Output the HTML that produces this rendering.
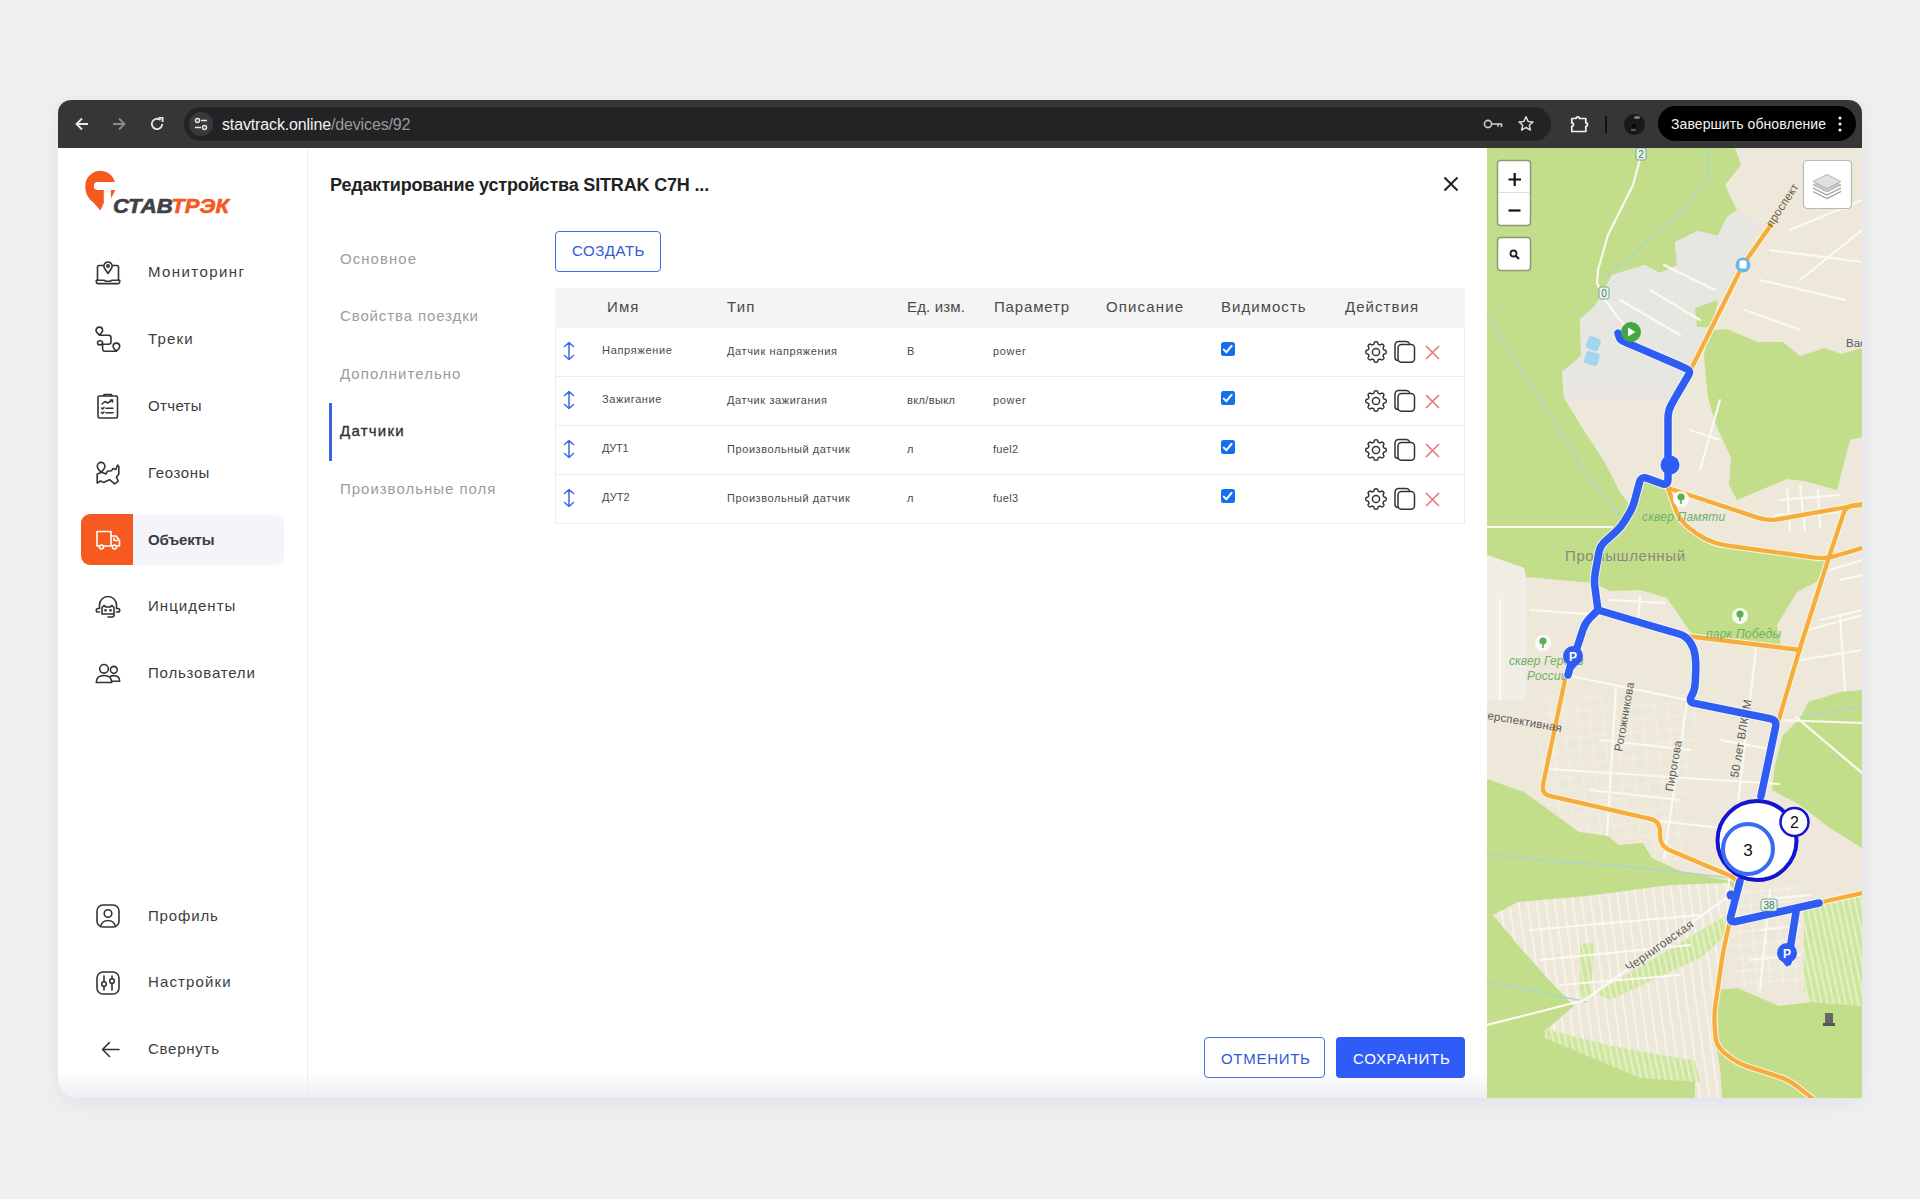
<!DOCTYPE html>
<html><head><meta charset="utf-8">
<style>
*{margin:0;padding:0;box-sizing:border-box}
html,body{width:1920px;height:1199px;overflow:hidden;background:#f0f0f0;font-family:"Liberation Sans",sans-serif;position:relative}
#win{position:absolute;left:58px;top:100px;width:1804px;height:998px;border-radius:13px 13px 20px 20px;background:#fff;overflow:hidden;box-shadow:0 6px 18px rgba(190,197,225,0.32)}
.a{position:absolute}
.t{position:absolute;white-space:nowrap;line-height:1}
.nav{font-size:15px;color:#3c3c3c;left:148px}
.tab{font-size:15px;color:#9c9c9c;left:340px}
.th{font-size:15px;color:#4a4a4a;top:298.7px}
.td{font-size:11px;color:#4a4a4a}
svg{position:absolute;overflow:visible}
.ic{fill:none;stroke:#333;stroke-width:1.6;stroke-linecap:round;stroke-linejoin:round}
</style></head><body>
<div id="win">
  <div class="a" style="left:0;top:0;width:1804px;height:48px;background:#363636"></div>
  <div class="a" style="left:0;top:48px;width:250px;height:950px;border-right:1px solid #ededed"></div>
  <div class="a" style="left:0;top:972px;width:1430px;height:26px;background:linear-gradient(to bottom,rgba(236,236,241,0),rgba(234,235,241,0.85))"></div>
</div>
<!-- toolbar -->
<svg style="left:74px;top:116px" width="16" height="16" viewBox="0 0 16 16"><path d="M14 8H2.5M8 2.5L2.5 8L8 13.5" stroke="#e8e8e8" stroke-width="1.8" fill="none"/></svg>
<svg style="left:111px;top:116px" width="16" height="16" viewBox="0 0 16 16"><path d="M2 8H13.5M8 2.5L13.5 8L8 13.5" stroke="#8a8a8a" stroke-width="1.8" fill="none"/></svg>
<svg style="left:149px;top:116px" width="16" height="16" viewBox="0 0 16 16"><path d="M13.2 8A5.2 5.2 0 1 1 11.6 4.2" stroke="#e8e8e8" stroke-width="1.8" fill="none"/><path d="M9.5 1.8H13.6V5.9" stroke="#e8e8e8" stroke-width="1.8" fill="none"/></svg>
<div class="a" style="left:184px;top:107px;width:1367px;height:34px;border-radius:17px;background:#232325"></div>
<div class="a" style="left:189px;top:112px;width:24px;height:24px;border-radius:12px;background:#3a3a3c"></div>
<svg style="left:194px;top:117px" width="14" height="14" viewBox="0 0 14 14"><circle cx="3.5" cy="3.5" r="2" stroke="#e8e8e8" stroke-width="1.5" fill="none"/><path d="M7 3.5H13M1 10.5H7" stroke="#e8e8e8" stroke-width="1.5"/><circle cx="10.5" cy="10.5" r="2" stroke="#e8e8e8" stroke-width="1.5" fill="none"/></svg>
<div class="t" style="left:222px;top:117px;font-size:16px;color:#f2f2f2;letter-spacing:-0.14px">stavtrack.online<span style="color:#9a9a9a">/devices/92</span></div>
<svg style="left:1483px;top:117px" width="20" height="14" viewBox="0 0 20 14"><circle cx="5" cy="7" r="3.6" stroke="#cfcfcf" stroke-width="1.6" fill="none"/><path d="M8.6 7H18.5V10M15 7V9.5" stroke="#cfcfcf" stroke-width="1.6" fill="none"/></svg>
<svg style="left:1517px;top:115px" width="18" height="18" viewBox="0 0 18 18"><path d="M9 1.8L11.1 6.4L16 6.9L12.3 10.2L13.4 15.1L9 12.5L4.6 15.1L5.7 10.2L2 6.9L6.9 6.4Z" stroke="#d8d8d8" stroke-width="1.5" fill="none" stroke-linejoin="round"/></svg>
<svg style="left:1570px;top:114px" width="20" height="20" viewBox="0 0 20 20"><path d="M1.8 4.5H6A1.7 1.7 0 0 1 9.4 4.5H15.8V8.9A1.7 1.7 0 0 1 15.8 12.3V17.5H1.8V12.3A1.7 1.7 0 0 0 1.8 8.9Z" stroke="#f2f2f2" stroke-width="1.7" fill="none" stroke-linejoin="round"/></svg>
<div class="a" style="left:1605px;top:116px;width:2px;height:17px;background:#111"></div>
<div class="a" style="left:1624px;top:114px;width:21px;height:21px;border-radius:11px;background:#17171c;overflow:hidden"><div class="a" style="left:10px;top:2px;width:6px;height:3px;border-radius:2px;background:#777"></div><div class="a" style="left:8px;top:10px;width:4px;height:4px;border-radius:2px;background:#050510"></div><div class="a" style="left:7px;top:15px;width:5px;height:2px;background:#555"></div></div>
<div class="a" style="left:1658px;top:106px;width:198px;height:35px;border-radius:18px;background:#000"></div>
<div class="t" style="left:1671px;top:117px;font-size:14px;color:#f4f4f4;letter-spacing:0.08px">Завершить обновление</div>
<svg style="left:1838px;top:115px" width="4" height="18" viewBox="0 0 4 18"><circle cx="2" cy="3" r="1.6" fill="#eee"/><circle cx="2" cy="9" r="1.6" fill="#eee"/><circle cx="2" cy="15" r="1.6" fill="#eee"/></svg>
<!-- logo -->
<svg style="left:80px;top:165px" width="40" height="48" viewBox="0 0 40 48">
  <path d="M34.8 17A15 15 0 0 0 5.3 21C5.3 29 8.5 34 13.5 37.5L20.4 45.6L23.8 38V25H17.8A4 4 0 0 1 17.8 17Z" fill="#f45a1f"/>
  <path d="M30.8 25H35.4L31 33.4Z" fill="#f45a1f"/>
</svg>
<svg style="left:112px;top:190px" width="120" height="26" viewBox="0 0 120 26"><text x="1" y="22.7" font-family="Liberation Sans" font-weight="700" font-size="19.5" font-style="italic" textLength="116" lengthAdjust="spacingAndGlyphs" fill="#3e4046" stroke="#3e4046" stroke-width="0.6">СТАВ<tspan fill="#f45a1f" stroke="#f45a1f">ТРЭК</tspan></text></svg>
<!-- active -->
<div class="a" style="left:81px;top:515px;width:203px;height:50px;border-radius:9px;background:#f4f4fa"></div>
<div class="a" style="left:81px;top:514px;width:52px;height:51px;border-radius:9px 0 0 9px;background:#f65a20"></div>
<!-- nav text -->
<div class="t nav" style="top:264px;letter-spacing:1.42px">Мониторинг</div>
<div class="t nav" style="top:331px;letter-spacing:1.16px">Треки</div>
<div class="t nav" style="top:398px;letter-spacing:0.35px">Отчеты</div>
<div class="t nav" style="top:465px;letter-spacing:0.59px">Геозоны</div>
<div class="t nav" style="top:532px;letter-spacing:-0.2px;font-weight:700;color:#3a3d45">Объекты</div>
<div class="t nav" style="top:598px;letter-spacing:1.04px">Инциденты</div>
<div class="t nav" style="top:665px;letter-spacing:0.81px">Пользователи</div>
<div class="t nav" style="top:908px;letter-spacing:0.84px">Профиль</div>
<div class="t nav" style="top:974px;letter-spacing:1.12px">Настройки</div>
<div class="t nav" style="top:1041px;letter-spacing:0.74px">Свернуть</div>
<!-- icons -->
<svg style="left:95px;top:260px" width="26" height="26" viewBox="0 0 26 26" class="ic">
  <path d="M2.5 19.5V7A1.5 1.5 0 0 1 4 5.5H8.5M17.5 5.5H22A1.5 1.5 0 0 1 23.5 7V19.5"/>
  <path d="M1.3 20.3H9.5L10.5 21.2H15.5L16.5 20.3H24.7V21.8A1.8 1.8 0 0 1 22.9 23.6H3.1A1.8 1.8 0 0 1 1.3 21.8Z"/>
  <path d="M13 13.5L9.3 8A4.15 4.15 0 1 1 16.7 8Z"/>
  <circle cx="13" cy="5.9" r="1.2"/>
</svg>
<svg style="left:95px;top:327px" width="26" height="26" viewBox="0 0 26 26" class="ic">
  <path d="M4.3 7.9C2.6 6.4 1 5 1 3.4A3.3 3.3 0 0 1 7.6 3.4C7.6 5 6.1 6.4 4.3 7.9Z"/>
  <path d="M4.3 7.9Q4.6 8.2 6 8.2H13.5A2.5 2.5 0 0 1 16 10.7V14.8A2.5 2.5 0 0 1 13.5 17.3H7.4"/>
  <ellipse cx="5" cy="15.8" rx="2.5" ry="2.1"/>
  <path d="M7.6 16.6V21.8A2.5 2.5 0 0 0 10.1 24.3H21.4"/>
  <path d="M21.4 24C19.7 22.5 18.1 21.1 18.1 19.4A3.3 3.3 0 0 1 24.7 19.4C24.7 21.1 23.1 22.5 21.4 24Z"/>
</svg>
<svg style="left:95px;top:393px" width="26" height="26" viewBox="0 0 26 26" class="ic">
  <rect x="3" y="3" width="19.5" height="22" rx="1.5"/>
  <path d="M9 3V1.5H16.5V3"/>
  <path d="M7 11L10 8.5L12.5 10L17.5 7M15.5 7H17.5V9"/>
  <path d="M6.5 15L7.5 16L9 14.5M11 15.2H18M6.5 19.5L7.5 20.5L9 19M11 19.7H18"/>
</svg>
<svg style="left:95px;top:460px" width="26" height="26" viewBox="0 0 26 26" class="ic">
  <path d="M6.1 12.2C4.2 10.4 2.3 8.6 2.3 6.2A3.8 3.8 0 0 1 9.9 6.2C9.9 8.6 8 10.4 6.1 12.2Z"/>
  <path d="M2.2 14V23L5.5 21L8.5 22.4L14.5 19.7L19.6 23.9L23.2 21.2L21.4 17L23.8 14V6.5L22.6 5L20.8 9.5L17.8 8.6L16.6 10.7L12.4 11.3L10.9 14L6.9 12.3Z"/>
</svg>
<svg style="left:95px;top:528px" width="26" height="24" viewBox="0 0 26 24" fill="none" stroke="#fff" stroke-width="1.6" stroke-linejoin="round">
  <path d="M2 3.5H16V18H2Z"/>
  <path d="M16 8H21L24.5 12.5V18H16"/>
  <circle cx="6.5" cy="19" r="2" fill="#f65a20"/>
  <circle cx="19.5" cy="19" r="2" fill="#f65a20"/>
  <path d="M19 9.5V12.5H23"/>
</svg>
<svg style="left:95px;top:594px" width="26" height="26" viewBox="0 0 26 26" class="ic">
  <path d="M4.5 14V11A8.5 8.5 0 0 1 21.5 11V14"/>
  <path d="M4.5 14.5H3A1.5 1.5 0 0 0 3 18H4.5M21.5 14.5H23A1.5 1.5 0 0 1 23 18H21.5"/>
  <path d="M7 20V13.5L9 11.5L11 13H15L17 11.5L19 13.5V20H7Z"/>
  <path d="M19 20V21A2 2 0 0 1 17 23H13"/>
  <circle cx="10.5" cy="16.3" r="0.6"/><circle cx="15.5" cy="16.3" r="0.6"/>
</svg>
<svg style="left:95px;top:660px" width="26" height="26" viewBox="0 0 26 26" class="ic">
  <circle cx="9" cy="8.8" r="4.3"/>
  <path d="M1.3 22.5C1.3 17.8 4.5 15.5 9 15.5C13.5 15.5 16.7 17.8 16.7 22.5Z"/>
  <circle cx="18.8" cy="9.8" r="3.4"/>
  <path d="M15.3 16.2C16.3 15.8 17.5 15.6 18.8 15.6C22.3 15.6 24.7 17.6 24.7 21.3H17.2"/>
</svg>
<svg style="left:95px;top:903px" width="26" height="26" viewBox="0 0 26 26" class="ic">
  <rect x="2" y="2" width="22" height="22" rx="6"/>
  <circle cx="13" cy="10.5" r="3.8"/>
  <path d="M5.5 23.5C6.5 19.5 9.5 17.5 13 17.5C16.5 17.5 19.5 19.5 20.5 23.5"/>
</svg>
<svg style="left:95px;top:970px" width="26" height="26" viewBox="0 0 26 26" class="ic">
  <rect x="2" y="2" width="22" height="22" rx="6"/>
  <path d="M9 6V11.5M9 16.5V20M17 6V8.5M17 13.5V20"/>
  <circle cx="9" cy="14" r="2.3"/><circle cx="17" cy="11" r="2.3"/>
</svg>
<svg style="left:101px;top:1041px" width="19" height="17" viewBox="0 0 19 17" class="ic">
  <path d="M18 8.5H1.5M8.5 1.5L1.5 8.5L8.5 15.5"/>
</svg>
<!-- modal -->
<div class="t" style="left:330px;top:176px;font-size:18px;font-weight:700;color:#222;letter-spacing:-0.17px">Редактирование устройства SITRAK C7H ...</div>
<svg style="left:1443px;top:176px" width="16" height="16" viewBox="0 0 16 16"><path d="M1.5 1.5L14.5 14.5M14.5 1.5L1.5 14.5" stroke="#222" stroke-width="2" fill="none"/></svg>
<div class="t tab" style="top:251px;letter-spacing:1.04px">Основное</div>
<div class="t tab" style="top:308px;letter-spacing:0.88px">Свойства поездки</div>
<div class="t tab" style="top:366px;letter-spacing:1.04px">Дополнительно</div>
<div class="t tab" style="top:423px;letter-spacing:1.25px;color:#333;-webkit-text-stroke:0.35px #333">Датчики</div>
<div class="t tab" style="top:481px;letter-spacing:0.98px">Произвольные поля</div>
<div class="a" style="left:329px;top:403px;width:3px;height:58px;background:#3a63e6"></div>
<!-- create -->
<div class="a" style="left:555px;top:231px;width:106px;height:41px;border:1.5px solid #4169e1;border-radius:4px"></div>
<div class="t" style="left:572px;top:243px;font-size:15px;color:#2f5ad8;letter-spacing:0.54px">СОЗДАТЬ</div>
<!-- table -->
<div class="a" style="left:555px;top:288px;width:910px;height:236px;border:1px solid #efefef;border-top:none"></div>
<div class="a" style="left:555px;top:288px;width:910px;height:40px;background:#f4f4f4"></div>
<div class="t th" style="left:607px;letter-spacing:1.14px">Имя</div>
<div class="t th" style="left:727px;letter-spacing:1.19px">Тип</div>
<div class="t th" style="left:907px;letter-spacing:0.14px">Ед. изм.</div>
<div class="t th" style="left:994px;letter-spacing:0.83px">Параметр</div>
<div class="t th" style="left:1106px;letter-spacing:1.14px">Описание</div>
<div class="t th" style="left:1221px;letter-spacing:1.03px">Видимость</div>
<div class="t th" style="left:1345px;letter-spacing:1.04px">Действия</div>
<div class="a" style="left:555px;top:376px;width:910px;height:1px;background:#ececec"></div>
<div class="a" style="left:555px;top:425px;width:910px;height:1px;background:#ececec"></div>
<div class="a" style="left:555px;top:474px;width:910px;height:1px;background:#ececec"></div>
<div class="a" style="left:555px;top:523px;width:910px;height:1px;background:#ececec"></div>
<svg style="left:563px;top:341px" width="12" height="20" viewBox="0 0 12 20"><path d="M6 1.5V18.5M1.5 5.5L6 1.5L10.5 5.5M1.5 14.5L6 18.5L10.5 14.5" stroke="#3d68e6" stroke-width="1.5" fill="none" stroke-linecap="round" stroke-linejoin="round"/></svg>
<div class="t td" style="left:602px;top:345px;letter-spacing:0.69px">Напряжение</div>
<div class="t td" style="left:727px;top:346px;letter-spacing:0.63px">Датчик напряжения</div>
<div class="t td" style="left:907px;top:346px;letter-spacing:0px">В</div>
<div class="t td" style="left:993px;top:346px;letter-spacing:0.66px">power</div>
<div class="a" style="left:1221px;top:342px;width:14px;height:14px;border-radius:2.5px;background:#1570ee"></div>
<svg style="left:1221px;top:342px" width="14" height="14" viewBox="0 0 14 14"><path d="M2.8 7.6L5.4 10.2L10.6 3.8" stroke="#fff" stroke-width="2" fill="none" stroke-linecap="round" stroke-linejoin="round"/></svg>
<svg style="left:1364px;top:339.5px" width="24" height="24" viewBox="0 0 24 24"><path d="M19.34,15.04 L19.24,15.34 L19.17,15.65 L19.13,15.99 L19.15,16.38 L19.57,17.06 L19.94,17.77 L19.88,18.21 L19.72,18.60 L19.51,18.94 L19.25,19.25 L18.94,19.51 L18.60,19.72 L18.21,19.88 L17.77,19.94 L17.06,19.57 L16.38,19.15 L15.99,19.13 L15.65,19.17 L15.34,19.24 L15.04,19.34 L14.76,19.48 L14.49,19.65 L14.22,19.86 L13.96,20.15 L13.78,20.93 L13.54,21.70 L13.18,21.96 L12.80,22.13 L12.40,22.22 L12.00,22.25 L11.60,22.22 L11.20,22.13 L10.82,21.96 L10.46,21.70 L10.22,20.93 L10.04,20.15 L9.78,19.86 L9.51,19.65 L9.24,19.48 L8.96,19.34 L8.66,19.24 L8.35,19.17 L8.01,19.13 L7.62,19.15 L6.94,19.57 L6.23,19.94 L5.79,19.88 L5.40,19.72 L5.06,19.51 L4.75,19.25 L4.49,18.94 L4.28,18.60 L4.12,18.21 L4.06,17.77 L4.43,17.06 L4.85,16.38 L4.87,15.99 L4.83,15.65 L4.76,15.34 L4.66,15.04 L4.52,14.76 L4.35,14.49 L4.14,14.22 L3.85,13.96 L3.07,13.78 L2.30,13.54 L2.04,13.18 L1.87,12.80 L1.78,12.40 L1.75,12.00 L1.78,11.60 L1.87,11.20 L2.04,10.82 L2.30,10.46 L3.07,10.22 L3.85,10.04 L4.14,9.78 L4.35,9.51 L4.52,9.24 L4.66,8.96 L4.76,8.66 L4.83,8.35 L4.87,8.01 L4.85,7.62 L4.43,6.94 L4.06,6.23 L4.12,5.79 L4.28,5.40 L4.49,5.06 L4.75,4.75 L5.06,4.49 L5.40,4.28 L5.79,4.12 L6.23,4.06 L6.94,4.43 L7.62,4.85 L8.01,4.87 L8.35,4.83 L8.66,4.76 L8.96,4.66 L9.24,4.52 L9.51,4.35 L9.78,4.14 L10.04,3.85 L10.22,3.07 L10.46,2.30 L10.82,2.04 L11.20,1.87 L11.60,1.78 L12.00,1.75 L12.40,1.78 L12.80,1.87 L13.18,2.04 L13.54,2.30 L13.78,3.07 L13.96,3.85 L14.22,4.14 L14.49,4.35 L14.76,4.52 L15.04,4.66 L15.34,4.76 L15.65,4.83 L15.99,4.87 L16.38,4.85 L17.06,4.43 L17.77,4.06 L18.21,4.12 L18.60,4.28 L18.94,4.49 L19.25,4.75 L19.51,5.06 L19.72,5.40 L19.88,5.79 L19.94,6.23 L19.57,6.94 L19.15,7.62 L19.13,8.01 L19.17,8.35 L19.24,8.66 L19.34,8.96 L19.48,9.24 L19.65,9.51 L19.86,9.78 L20.15,10.04 L20.93,10.22 L21.70,10.46 L21.96,10.82 L22.13,11.20 L22.22,11.60 L22.25,12.00 L22.22,12.40 L22.13,12.80 L21.96,13.18 L21.70,13.54 L20.93,13.78 L20.15,13.96 L19.86,14.22 L19.65,14.49 L19.48,14.76Z" stroke="#333" stroke-width="1.5" fill="none" stroke-linejoin="round"/><circle cx="12" cy="12" r="3.6" stroke="#333" stroke-width="1.5" fill="none"/></svg>
<svg style="left:1394px;top:340px" width="22" height="24" viewBox="0 0 22 24"><path d="M3.5 20.5A3 3 0 0 1 1 17.5V5A3.5 3.5 0 0 1 4.5 1.5H12.5A3.5 3.5 0 0 1 15.5 3.5" stroke="#333" stroke-width="1.5" fill="none" stroke-linecap="round"/><rect x="4" y="4.5" width="16.5" height="17.8" rx="3.5" stroke="#333" stroke-width="1.5" fill="#fff"/></svg>
<svg style="left:1425px;top:345px" width="15" height="15" viewBox="0 0 15 15"><path d="M1 1L14 14M14 1L1 14" stroke="#e97480" stroke-width="1.6" fill="none"/></svg>
<svg style="left:563px;top:390px" width="12" height="20" viewBox="0 0 12 20"><path d="M6 1.5V18.5M1.5 5.5L6 1.5L10.5 5.5M1.5 14.5L6 18.5L10.5 14.5" stroke="#3d68e6" stroke-width="1.5" fill="none" stroke-linecap="round" stroke-linejoin="round"/></svg>
<div class="t td" style="left:602px;top:394px;letter-spacing:0.62px">Зажигание</div>
<div class="t td" style="left:727px;top:395px;letter-spacing:0.61px">Датчик зажигания</div>
<div class="t td" style="left:907px;top:395px;letter-spacing:0.38px">вкл/выкл</div>
<div class="t td" style="left:993px;top:395px;letter-spacing:0.66px">power</div>
<div class="a" style="left:1221px;top:391px;width:14px;height:14px;border-radius:2.5px;background:#1570ee"></div>
<svg style="left:1221px;top:391px" width="14" height="14" viewBox="0 0 14 14"><path d="M2.8 7.6L5.4 10.2L10.6 3.8" stroke="#fff" stroke-width="2" fill="none" stroke-linecap="round" stroke-linejoin="round"/></svg>
<svg style="left:1364px;top:388.5px" width="24" height="24" viewBox="0 0 24 24"><path d="M19.34,15.04 L19.24,15.34 L19.17,15.65 L19.13,15.99 L19.15,16.38 L19.57,17.06 L19.94,17.77 L19.88,18.21 L19.72,18.60 L19.51,18.94 L19.25,19.25 L18.94,19.51 L18.60,19.72 L18.21,19.88 L17.77,19.94 L17.06,19.57 L16.38,19.15 L15.99,19.13 L15.65,19.17 L15.34,19.24 L15.04,19.34 L14.76,19.48 L14.49,19.65 L14.22,19.86 L13.96,20.15 L13.78,20.93 L13.54,21.70 L13.18,21.96 L12.80,22.13 L12.40,22.22 L12.00,22.25 L11.60,22.22 L11.20,22.13 L10.82,21.96 L10.46,21.70 L10.22,20.93 L10.04,20.15 L9.78,19.86 L9.51,19.65 L9.24,19.48 L8.96,19.34 L8.66,19.24 L8.35,19.17 L8.01,19.13 L7.62,19.15 L6.94,19.57 L6.23,19.94 L5.79,19.88 L5.40,19.72 L5.06,19.51 L4.75,19.25 L4.49,18.94 L4.28,18.60 L4.12,18.21 L4.06,17.77 L4.43,17.06 L4.85,16.38 L4.87,15.99 L4.83,15.65 L4.76,15.34 L4.66,15.04 L4.52,14.76 L4.35,14.49 L4.14,14.22 L3.85,13.96 L3.07,13.78 L2.30,13.54 L2.04,13.18 L1.87,12.80 L1.78,12.40 L1.75,12.00 L1.78,11.60 L1.87,11.20 L2.04,10.82 L2.30,10.46 L3.07,10.22 L3.85,10.04 L4.14,9.78 L4.35,9.51 L4.52,9.24 L4.66,8.96 L4.76,8.66 L4.83,8.35 L4.87,8.01 L4.85,7.62 L4.43,6.94 L4.06,6.23 L4.12,5.79 L4.28,5.40 L4.49,5.06 L4.75,4.75 L5.06,4.49 L5.40,4.28 L5.79,4.12 L6.23,4.06 L6.94,4.43 L7.62,4.85 L8.01,4.87 L8.35,4.83 L8.66,4.76 L8.96,4.66 L9.24,4.52 L9.51,4.35 L9.78,4.14 L10.04,3.85 L10.22,3.07 L10.46,2.30 L10.82,2.04 L11.20,1.87 L11.60,1.78 L12.00,1.75 L12.40,1.78 L12.80,1.87 L13.18,2.04 L13.54,2.30 L13.78,3.07 L13.96,3.85 L14.22,4.14 L14.49,4.35 L14.76,4.52 L15.04,4.66 L15.34,4.76 L15.65,4.83 L15.99,4.87 L16.38,4.85 L17.06,4.43 L17.77,4.06 L18.21,4.12 L18.60,4.28 L18.94,4.49 L19.25,4.75 L19.51,5.06 L19.72,5.40 L19.88,5.79 L19.94,6.23 L19.57,6.94 L19.15,7.62 L19.13,8.01 L19.17,8.35 L19.24,8.66 L19.34,8.96 L19.48,9.24 L19.65,9.51 L19.86,9.78 L20.15,10.04 L20.93,10.22 L21.70,10.46 L21.96,10.82 L22.13,11.20 L22.22,11.60 L22.25,12.00 L22.22,12.40 L22.13,12.80 L21.96,13.18 L21.70,13.54 L20.93,13.78 L20.15,13.96 L19.86,14.22 L19.65,14.49 L19.48,14.76Z" stroke="#333" stroke-width="1.5" fill="none" stroke-linejoin="round"/><circle cx="12" cy="12" r="3.6" stroke="#333" stroke-width="1.5" fill="none"/></svg>
<svg style="left:1394px;top:389px" width="22" height="24" viewBox="0 0 22 24"><path d="M3.5 20.5A3 3 0 0 1 1 17.5V5A3.5 3.5 0 0 1 4.5 1.5H12.5A3.5 3.5 0 0 1 15.5 3.5" stroke="#333" stroke-width="1.5" fill="none" stroke-linecap="round"/><rect x="4" y="4.5" width="16.5" height="17.8" rx="3.5" stroke="#333" stroke-width="1.5" fill="#fff"/></svg>
<svg style="left:1425px;top:394px" width="15" height="15" viewBox="0 0 15 15"><path d="M1 1L14 14M14 1L1 14" stroke="#e97480" stroke-width="1.6" fill="none"/></svg>
<svg style="left:563px;top:439px" width="12" height="20" viewBox="0 0 12 20"><path d="M6 1.5V18.5M1.5 5.5L6 1.5L10.5 5.5M1.5 14.5L6 18.5L10.5 14.5" stroke="#3d68e6" stroke-width="1.5" fill="none" stroke-linecap="round" stroke-linejoin="round"/></svg>
<div class="t td" style="left:602px;top:443px;letter-spacing:-0.3px">ДУТ1</div>
<div class="t td" style="left:727px;top:444px;letter-spacing:0.58px">Произвольный датчик</div>
<div class="t td" style="left:907px;top:444px;letter-spacing:0px">л</div>
<div class="t td" style="left:993px;top:444px;letter-spacing:0.29px">fuel2</div>
<div class="a" style="left:1221px;top:440px;width:14px;height:14px;border-radius:2.5px;background:#1570ee"></div>
<svg style="left:1221px;top:440px" width="14" height="14" viewBox="0 0 14 14"><path d="M2.8 7.6L5.4 10.2L10.6 3.8" stroke="#fff" stroke-width="2" fill="none" stroke-linecap="round" stroke-linejoin="round"/></svg>
<svg style="left:1364px;top:437.5px" width="24" height="24" viewBox="0 0 24 24"><path d="M19.34,15.04 L19.24,15.34 L19.17,15.65 L19.13,15.99 L19.15,16.38 L19.57,17.06 L19.94,17.77 L19.88,18.21 L19.72,18.60 L19.51,18.94 L19.25,19.25 L18.94,19.51 L18.60,19.72 L18.21,19.88 L17.77,19.94 L17.06,19.57 L16.38,19.15 L15.99,19.13 L15.65,19.17 L15.34,19.24 L15.04,19.34 L14.76,19.48 L14.49,19.65 L14.22,19.86 L13.96,20.15 L13.78,20.93 L13.54,21.70 L13.18,21.96 L12.80,22.13 L12.40,22.22 L12.00,22.25 L11.60,22.22 L11.20,22.13 L10.82,21.96 L10.46,21.70 L10.22,20.93 L10.04,20.15 L9.78,19.86 L9.51,19.65 L9.24,19.48 L8.96,19.34 L8.66,19.24 L8.35,19.17 L8.01,19.13 L7.62,19.15 L6.94,19.57 L6.23,19.94 L5.79,19.88 L5.40,19.72 L5.06,19.51 L4.75,19.25 L4.49,18.94 L4.28,18.60 L4.12,18.21 L4.06,17.77 L4.43,17.06 L4.85,16.38 L4.87,15.99 L4.83,15.65 L4.76,15.34 L4.66,15.04 L4.52,14.76 L4.35,14.49 L4.14,14.22 L3.85,13.96 L3.07,13.78 L2.30,13.54 L2.04,13.18 L1.87,12.80 L1.78,12.40 L1.75,12.00 L1.78,11.60 L1.87,11.20 L2.04,10.82 L2.30,10.46 L3.07,10.22 L3.85,10.04 L4.14,9.78 L4.35,9.51 L4.52,9.24 L4.66,8.96 L4.76,8.66 L4.83,8.35 L4.87,8.01 L4.85,7.62 L4.43,6.94 L4.06,6.23 L4.12,5.79 L4.28,5.40 L4.49,5.06 L4.75,4.75 L5.06,4.49 L5.40,4.28 L5.79,4.12 L6.23,4.06 L6.94,4.43 L7.62,4.85 L8.01,4.87 L8.35,4.83 L8.66,4.76 L8.96,4.66 L9.24,4.52 L9.51,4.35 L9.78,4.14 L10.04,3.85 L10.22,3.07 L10.46,2.30 L10.82,2.04 L11.20,1.87 L11.60,1.78 L12.00,1.75 L12.40,1.78 L12.80,1.87 L13.18,2.04 L13.54,2.30 L13.78,3.07 L13.96,3.85 L14.22,4.14 L14.49,4.35 L14.76,4.52 L15.04,4.66 L15.34,4.76 L15.65,4.83 L15.99,4.87 L16.38,4.85 L17.06,4.43 L17.77,4.06 L18.21,4.12 L18.60,4.28 L18.94,4.49 L19.25,4.75 L19.51,5.06 L19.72,5.40 L19.88,5.79 L19.94,6.23 L19.57,6.94 L19.15,7.62 L19.13,8.01 L19.17,8.35 L19.24,8.66 L19.34,8.96 L19.48,9.24 L19.65,9.51 L19.86,9.78 L20.15,10.04 L20.93,10.22 L21.70,10.46 L21.96,10.82 L22.13,11.20 L22.22,11.60 L22.25,12.00 L22.22,12.40 L22.13,12.80 L21.96,13.18 L21.70,13.54 L20.93,13.78 L20.15,13.96 L19.86,14.22 L19.65,14.49 L19.48,14.76Z" stroke="#333" stroke-width="1.5" fill="none" stroke-linejoin="round"/><circle cx="12" cy="12" r="3.6" stroke="#333" stroke-width="1.5" fill="none"/></svg>
<svg style="left:1394px;top:438px" width="22" height="24" viewBox="0 0 22 24"><path d="M3.5 20.5A3 3 0 0 1 1 17.5V5A3.5 3.5 0 0 1 4.5 1.5H12.5A3.5 3.5 0 0 1 15.5 3.5" stroke="#333" stroke-width="1.5" fill="none" stroke-linecap="round"/><rect x="4" y="4.5" width="16.5" height="17.8" rx="3.5" stroke="#333" stroke-width="1.5" fill="#fff"/></svg>
<svg style="left:1425px;top:443px" width="15" height="15" viewBox="0 0 15 15"><path d="M1 1L14 14M14 1L1 14" stroke="#e97480" stroke-width="1.6" fill="none"/></svg>
<svg style="left:563px;top:488px" width="12" height="20" viewBox="0 0 12 20"><path d="M6 1.5V18.5M1.5 5.5L6 1.5L10.5 5.5M1.5 14.5L6 18.5L10.5 14.5" stroke="#3d68e6" stroke-width="1.5" fill="none" stroke-linecap="round" stroke-linejoin="round"/></svg>
<div class="t td" style="left:602px;top:492px;letter-spacing:0.06px">ДУТ2</div>
<div class="t td" style="left:727px;top:493px;letter-spacing:0.58px">Произвольный датчик</div>
<div class="t td" style="left:907px;top:493px;letter-spacing:0px">л</div>
<div class="t td" style="left:993px;top:493px;letter-spacing:0.29px">fuel3</div>
<div class="a" style="left:1221px;top:489px;width:14px;height:14px;border-radius:2.5px;background:#1570ee"></div>
<svg style="left:1221px;top:489px" width="14" height="14" viewBox="0 0 14 14"><path d="M2.8 7.6L5.4 10.2L10.6 3.8" stroke="#fff" stroke-width="2" fill="none" stroke-linecap="round" stroke-linejoin="round"/></svg>
<svg style="left:1364px;top:486.5px" width="24" height="24" viewBox="0 0 24 24"><path d="M19.34,15.04 L19.24,15.34 L19.17,15.65 L19.13,15.99 L19.15,16.38 L19.57,17.06 L19.94,17.77 L19.88,18.21 L19.72,18.60 L19.51,18.94 L19.25,19.25 L18.94,19.51 L18.60,19.72 L18.21,19.88 L17.77,19.94 L17.06,19.57 L16.38,19.15 L15.99,19.13 L15.65,19.17 L15.34,19.24 L15.04,19.34 L14.76,19.48 L14.49,19.65 L14.22,19.86 L13.96,20.15 L13.78,20.93 L13.54,21.70 L13.18,21.96 L12.80,22.13 L12.40,22.22 L12.00,22.25 L11.60,22.22 L11.20,22.13 L10.82,21.96 L10.46,21.70 L10.22,20.93 L10.04,20.15 L9.78,19.86 L9.51,19.65 L9.24,19.48 L8.96,19.34 L8.66,19.24 L8.35,19.17 L8.01,19.13 L7.62,19.15 L6.94,19.57 L6.23,19.94 L5.79,19.88 L5.40,19.72 L5.06,19.51 L4.75,19.25 L4.49,18.94 L4.28,18.60 L4.12,18.21 L4.06,17.77 L4.43,17.06 L4.85,16.38 L4.87,15.99 L4.83,15.65 L4.76,15.34 L4.66,15.04 L4.52,14.76 L4.35,14.49 L4.14,14.22 L3.85,13.96 L3.07,13.78 L2.30,13.54 L2.04,13.18 L1.87,12.80 L1.78,12.40 L1.75,12.00 L1.78,11.60 L1.87,11.20 L2.04,10.82 L2.30,10.46 L3.07,10.22 L3.85,10.04 L4.14,9.78 L4.35,9.51 L4.52,9.24 L4.66,8.96 L4.76,8.66 L4.83,8.35 L4.87,8.01 L4.85,7.62 L4.43,6.94 L4.06,6.23 L4.12,5.79 L4.28,5.40 L4.49,5.06 L4.75,4.75 L5.06,4.49 L5.40,4.28 L5.79,4.12 L6.23,4.06 L6.94,4.43 L7.62,4.85 L8.01,4.87 L8.35,4.83 L8.66,4.76 L8.96,4.66 L9.24,4.52 L9.51,4.35 L9.78,4.14 L10.04,3.85 L10.22,3.07 L10.46,2.30 L10.82,2.04 L11.20,1.87 L11.60,1.78 L12.00,1.75 L12.40,1.78 L12.80,1.87 L13.18,2.04 L13.54,2.30 L13.78,3.07 L13.96,3.85 L14.22,4.14 L14.49,4.35 L14.76,4.52 L15.04,4.66 L15.34,4.76 L15.65,4.83 L15.99,4.87 L16.38,4.85 L17.06,4.43 L17.77,4.06 L18.21,4.12 L18.60,4.28 L18.94,4.49 L19.25,4.75 L19.51,5.06 L19.72,5.40 L19.88,5.79 L19.94,6.23 L19.57,6.94 L19.15,7.62 L19.13,8.01 L19.17,8.35 L19.24,8.66 L19.34,8.96 L19.48,9.24 L19.65,9.51 L19.86,9.78 L20.15,10.04 L20.93,10.22 L21.70,10.46 L21.96,10.82 L22.13,11.20 L22.22,11.60 L22.25,12.00 L22.22,12.40 L22.13,12.80 L21.96,13.18 L21.70,13.54 L20.93,13.78 L20.15,13.96 L19.86,14.22 L19.65,14.49 L19.48,14.76Z" stroke="#333" stroke-width="1.5" fill="none" stroke-linejoin="round"/><circle cx="12" cy="12" r="3.6" stroke="#333" stroke-width="1.5" fill="none"/></svg>
<svg style="left:1394px;top:487px" width="22" height="24" viewBox="0 0 22 24"><path d="M3.5 20.5A3 3 0 0 1 1 17.5V5A3.5 3.5 0 0 1 4.5 1.5H12.5A3.5 3.5 0 0 1 15.5 3.5" stroke="#333" stroke-width="1.5" fill="none" stroke-linecap="round"/><rect x="4" y="4.5" width="16.5" height="17.8" rx="3.5" stroke="#333" stroke-width="1.5" fill="#fff"/></svg>
<svg style="left:1425px;top:492px" width="15" height="15" viewBox="0 0 15 15"><path d="M1 1L14 14M14 1L1 14" stroke="#e97480" stroke-width="1.6" fill="none"/></svg>
<div class="a" style="left:1204px;top:1037px;width:121px;height:41px;border:1.5px solid #4a6fe0;border-radius:4px;background:#fff"></div>
<div class="t" style="left:1221px;top:1051px;font-size:15px;color:#2f5ad8;letter-spacing:0.7px">ОТМЕНИТЬ</div>
<div class="a" style="left:1336px;top:1037px;width:129px;height:41px;border-radius:4px;background:#2f5cf7"></div>
<div class="t" style="left:1353px;top:1051px;font-size:15px;color:#fff;letter-spacing:0.7px">СОХРАНИТЬ</div>
<svg style="left:1487px;top:148px" width="375" height="950" viewBox="1487 148 375 950">
<defs><clipPath id="mc"><rect x="1487" y="148" width="375" height="950"/></clipPath><pattern id="pv" width="9" height="9" patternUnits="userSpaceOnUse" patternTransform="rotate(-8)"><rect width="9" height="9" fill="none"/><line x1="1" y1="0" x2="1" y2="9" stroke="#fbf9f2" stroke-width="1.4"/></pattern><pattern id="pg" width="13" height="13" patternUnits="userSpaceOnUse" patternTransform="rotate(-5)"><line x1="1" y1="0" x2="1" y2="13" stroke="#fbf9f2" stroke-width="1.3"/><line x1="0" y1="1" x2="13" y2="1" stroke="#fbf9f2" stroke-width="1.3"/></pattern><pattern id="ps" width="6" height="6" patternUnits="userSpaceOnUse" patternTransform="rotate(-12)"><line x1="1" y1="0" x2="1" y2="6" stroke="#eef6dc" stroke-width="1.3"/></pattern></defs><g clip-path="url(#mc)">
<rect x="1487" y="148" width="375" height="950" fill="#c3de8a"/>
<polygon points="1735,148 1741,165 1725,185 1737,210 1727,217 1718,236 1698,231 1675,242 1677,265 1660,273 1645,265 1612,275 1595,306 1580,319 1581,356 1562,372 1564,398 1583,429 1604,461 1620,492 1633,510 1600,545 1594,583 1526,577 1524,568 1487,555 1487,779 1524,792 1579,832 1608,836 1619,845 1643,843 1652,858 1680,871 1735,882 1737,890 1727,927 1722,952 1716,990 1737,988 1779,1006 1812,1002 1862,1006 1862,148" fill="#ede8d9"/>
<polygon points="1564,398 1562,372 1581,356 1580,319 1595,306 1612,275 1645,265 1660,273 1677,265 1675,242 1698,231 1718,236 1727,217 1737,210 1760,225 1691,369 1680,398" fill="#e7e6e0"/>
<polygon points="1487,555 1524,568 1526,577 1526,700 1487,700" fill="#f0eee7"/>
<polygon points="1493,915 1518,902 1587,896 1670,885 1727,883 1737,890 1727,927 1722,952 1716,994 1714,1036 1720,1067 1722,1098 1695,1098 1695,1063 1612,1048 1545,1031 1574,1006 1550,981 1524,952" fill="#ede8d9"/>
<polygon points="1493,915 1518,902 1587,896 1670,885 1727,883 1737,890 1727,927 1722,952 1716,994 1714,1036 1720,1067 1722,1098 1695,1098 1695,1063 1612,1048 1545,1031 1574,1006 1550,981 1524,952" fill="url(#pv)" opacity="0.9"/>
<polygon points="1704,356 1708,331 1727,329 1758,342 1783,342 1800,356 1825,348 1841,354 1862,348 1862,437 1850,440 1837,490 1804,481 1787,479 1737,500 1729,485 1731,458 1716,425 1708,398" fill="#c3de8a"/>
<polygon points="1633,510 1641,481 1668,488 1679,515 1687,527 1716,544 1821,558 1829,556 1820,580 1797,592 1777,625 1782,650 1691,633 1667,598 1640,590 1610,591 1596,584 1600,545" fill="#c3de8a"/>
<polygon points="1862,690 1841,692 1808,702 1800,719 1783,735 1775,765 1772,790 1800,805 1830,828 1862,848" fill="#c3de8a"/>
<polygon points="1695,308 1718,300 1712,327 1697,327" fill="#c3de8a"/>
<polygon points="1545,1029 1612,1046 1695,1061 1700,1082 1640,1078 1545,1038" fill="#cfe6a0"/>
<polygon points="1545,1029 1612,1046 1695,1061 1700,1082 1640,1078 1545,1038" fill="url(#ps)"/>
<polygon points="1804,905 1862,895 1862,1006 1812,1002 1804,990" fill="#cfe6a0"/>
<polygon points="1804,905 1862,895 1862,1006 1812,1002 1804,990" fill="url(#ps)"/>
<polygon points="1596,993 1727,915 1727,935 1700,958 1610,1000" fill="#cfe6a0"/>
<polygon points="1596,993 1727,915 1727,935 1700,958 1610,1000" fill="url(#ps)"/>
<polygon points="1580,944 1594,943 1591,997 1580,998" fill="#cfe6a0"/>
<polygon points="1580,944 1594,943 1591,997 1580,998" fill="url(#ps)"/>
<polygon points="1737,890 1800,884 1804,990 1737,988 1727,927" fill="url(#pg)" opacity="0.5"/>
<polygon points="1541,690 1700,705 1680,871 1652,858 1643,843 1608,836 1579,832 1539,798" fill="url(#pg)" opacity="0.35"/>
<polyline points="1706,148 1710,179 1675,217 1623,263 1604,277" fill="none" stroke="#a9d6c8" stroke-width="1.5"/>
<polyline points="1487,315 1539,398 1591,481 1620,515" fill="none" stroke="#a9d6c8" stroke-width="1.5"/>
<polyline points="1487,854 1560,862 1612,865 1680,872 1737,879" fill="none" stroke="#a9d6c8" stroke-width="1.5"/>
<polyline points="1487,981 1587,1002" fill="none" stroke="#a9d6c8" stroke-width="1.5"/>
<polyline points="1800,717 1862,706" fill="none" stroke="#a9d6c8" stroke-width="1.5"/>
<polyline points="1641,155 1633,185 1608,235 1598,270 1597,283 1604,298 1616,315 1630,332" fill="none" stroke="#fbf9f2" stroke-width="2.2" stroke-linejoin="round" stroke-linecap="round"/>
<polyline points="1487,527 1612,527" fill="none" stroke="#fbf9f2" stroke-width="2.2" stroke-linejoin="round" stroke-linecap="round"/>
<polyline points="1566,675 1687,700 1779,720 1862,723" fill="none" stroke="#fbf9f2" stroke-width="2.2" stroke-linejoin="round" stroke-linecap="round"/>
<polyline points="1687,702 1664,858" fill="none" stroke="#fbf9f2" stroke-width="2.2" stroke-linejoin="round" stroke-linecap="round"/>
<polyline points="1616,686 1607,835" fill="none" stroke="#fbf9f2" stroke-width="2.2" stroke-linejoin="round" stroke-linecap="round"/>
<polyline points="1756,648 1727,898" fill="none" stroke="#fbf9f2" stroke-width="2.2" stroke-linejoin="round" stroke-linecap="round"/>
<polyline points="1549,769 1779,784" fill="none" stroke="#fbf9f2" stroke-width="2.2" stroke-linejoin="round" stroke-linecap="round"/>
<polyline points="1660,821 1756,832" fill="none" stroke="#fbf9f2" stroke-width="2.2" stroke-linejoin="round" stroke-linecap="round"/>
<polyline points="1796,717 1862,773" fill="none" stroke="#fbf9f2" stroke-width="2.2" stroke-linejoin="round" stroke-linecap="round"/>
<polyline points="1585,1000 1729,896" fill="none" stroke="#fbf9f2" stroke-width="2.2" stroke-linejoin="round" stroke-linecap="round"/>
<polyline points="1487,1025 1585,1000" fill="none" stroke="#fbf9f2" stroke-width="2.2" stroke-linejoin="round" stroke-linecap="round"/>
<polyline points="1664,265 1715,290" fill="none" stroke="#fbf9f2" stroke-width="2.2" stroke-linejoin="round" stroke-linecap="round"/>
<polyline points="1650,290 1700,320" fill="none" stroke="#fbf9f2" stroke-width="2.2" stroke-linejoin="round" stroke-linecap="round"/>
<polyline points="1620,300 1680,335" fill="none" stroke="#fbf9f2" stroke-width="2.2" stroke-linejoin="round" stroke-linecap="round"/>
<polyline points="1770,250 1862,262" fill="none" stroke="#fbf9f2" stroke-width="2.2" stroke-linejoin="round" stroke-linecap="round"/>
<polyline points="1760,280 1845,300" fill="none" stroke="#fbf9f2" stroke-width="2.2" stroke-linejoin="round" stroke-linecap="round"/>
<polyline points="1745,310 1800,330" fill="none" stroke="#fbf9f2" stroke-width="2.2" stroke-linejoin="round" stroke-linecap="round"/>
<polyline points="1790,230 1862,200" fill="none" stroke="#fbf9f2" stroke-width="2.2" stroke-linejoin="round" stroke-linecap="round"/>
<polyline points="1800,280 1862,230" fill="none" stroke="#fbf9f2" stroke-width="2.2" stroke-linejoin="round" stroke-linecap="round"/>
<polyline points="1700,470 1720,400" fill="none" stroke="#fbf9f2" stroke-width="2.2" stroke-linejoin="round" stroke-linecap="round"/>
<polyline points="1690,430 1720,440" fill="none" stroke="#fbf9f2" stroke-width="2.2" stroke-linejoin="round" stroke-linecap="round"/>
<polyline points="1610,600 1665,603" fill="none" stroke="#fbf9f2" stroke-width="2.2" stroke-linejoin="round" stroke-linecap="round"/>
<polyline points="1640,596 1638,620" fill="none" stroke="#fbf9f2" stroke-width="2.2" stroke-linejoin="round" stroke-linecap="round"/>
<polyline points="1840,580 1862,575" fill="none" stroke="#fbf9f2" stroke-width="2.2" stroke-linejoin="round" stroke-linecap="round"/>
<polyline points="1820,620 1862,610" fill="none" stroke="#fbf9f2" stroke-width="2.2" stroke-linejoin="round" stroke-linecap="round"/>
<polyline points="1787,488 1790,530" fill="none" stroke="#fbf9f2" stroke-width="2.2" stroke-linejoin="round" stroke-linecap="round"/>
<polyline points="1800,486 1805,530" fill="none" stroke="#fbf9f2" stroke-width="2.2" stroke-linejoin="round" stroke-linecap="round"/>
<polyline points="1818,490 1820,528" fill="none" stroke="#fbf9f2" stroke-width="2.2" stroke-linejoin="round" stroke-linecap="round"/>
<polyline points="1780,500 1840,495" fill="none" stroke="#fbf9f2" stroke-width="2.2" stroke-linejoin="round" stroke-linecap="round"/>
<polyline points="1775,515 1840,512" fill="none" stroke="#fbf9f2" stroke-width="2.2" stroke-linejoin="round" stroke-linecap="round"/>
<polyline points="1830,570 1862,560" fill="none" stroke="#fbf9f2" stroke-width="2.2" stroke-linejoin="round" stroke-linecap="round"/>
<polyline points="1808,630 1862,615" fill="none" stroke="#fbf9f2" stroke-width="2.2" stroke-linejoin="round" stroke-linecap="round"/>
<polyline points="1800,660 1862,650" fill="none" stroke="#fbf9f2" stroke-width="2.2" stroke-linejoin="round" stroke-linecap="round"/>
<polyline points="1840,615 1845,690" fill="none" stroke="#fbf9f2" stroke-width="2.2" stroke-linejoin="round" stroke-linecap="round"/>
<polyline points="1530,610 1600,615" fill="none" stroke="#fbf9f2" stroke-width="2.2" stroke-linejoin="round" stroke-linecap="round"/>
<polyline points="1500,600 1500,700" fill="none" stroke="#fbf9f2" stroke-width="2.2" stroke-linejoin="round" stroke-linecap="round"/>
<polyline points="1600,740 1690,750" fill="none" stroke="#fbf9f2" stroke-width="2.2" stroke-linejoin="round" stroke-linecap="round"/>
<polyline points="1590,790 1680,800" fill="none" stroke="#fbf9f2" stroke-width="2.2" stroke-linejoin="round" stroke-linecap="round"/>
<polyline points="1720,740 1775,750" fill="none" stroke="#fbf9f2" stroke-width="2.2" stroke-linejoin="round" stroke-linecap="round"/>
<polyline points="1760,900 1810,895" fill="none" stroke="#fbf9f2" stroke-width="2.2" stroke-linejoin="round" stroke-linecap="round"/>
<polyline points="1760,930 1800,925" fill="none" stroke="#fbf9f2" stroke-width="2.2" stroke-linejoin="round" stroke-linecap="round"/>
<polyline points="1750,960 1800,955" fill="none" stroke="#fbf9f2" stroke-width="2.2" stroke-linejoin="round" stroke-linecap="round"/>
<polyline points="1770,890 1760,990" fill="none" stroke="#fbf9f2" stroke-width="2.2" stroke-linejoin="round" stroke-linecap="round"/>
<polyline points="1530,930 1700,915" fill="none" stroke="#fbf9f2" stroke-width="2.2" stroke-linejoin="round" stroke-linecap="round"/>
<polyline points="1540,960 1690,945" fill="none" stroke="#fbf9f2" stroke-width="2.2" stroke-linejoin="round" stroke-linecap="round"/>
<polyline points="1560,985 1680,975" fill="none" stroke="#fbf9f2" stroke-width="2.2" stroke-linejoin="round" stroke-linecap="round"/>
<rect x="1587" y="337" width="13" height="13" rx="3" fill="#a4d4f0" transform="rotate(20 1593 343)"/>
<rect x="1585" y="352" width="14" height="13" rx="3" fill="#a4d4f0" transform="rotate(15 1592 358)"/>
<path d="M1771,225 L1748.7,256.8 Q1743,265 1738.5,273.9 L1695.5,360.1 Q1691,369 1686.1,377.7 L1672.9,401.3 Q1668,410 1668.0,420.0 L1668,488" fill="none" stroke="#fdf3dc" stroke-width="6.5" stroke-linejoin="round" stroke-linecap="round"/>
<path d="M1668,488 L1758.5,517.9 Q1768,521 1777.8,519.3 L1832.2,509.7 Q1842,508 1851.8,506.0 L1862,504" fill="none" stroke="#fdf3dc" stroke-width="6.5" stroke-linejoin="round" stroke-linecap="round"/>
<path d="M1668,488 L1675.7,509.6 Q1679,519 1686.5,525.6 L1688.5,527.4 Q1696,534 1704.9,538.5 L1707.1,539.5 Q1716,544 1725.9,545.4 L1815.1,557.6 Q1825,559 1834.6,556.2 L1862,548" fill="none" stroke="#fdf3dc" stroke-width="6.5" stroke-linejoin="round" stroke-linecap="round"/>
<path d="M1862,505 L1854.0,505.5 Q1846,506 1843.5,513.6 L1832.2,547.5 Q1829,557 1826.0,566.5 L1803.0,638.5 Q1800,648 1797.2,657.6 L1781.8,709.4 Q1779,719 1776.5,728.7 L1756,809" fill="none" stroke="#fdf3dc" stroke-width="6.5" stroke-linejoin="round" stroke-linecap="round"/>
<path d="M1687,636 L1800,650" fill="none" stroke="#fdf3dc" stroke-width="6.5" stroke-linejoin="round" stroke-linecap="round"/>
<path d="M1566,675 L1543.1,784.2 Q1541,794 1550.8,796.2 L1650.2,818.8 Q1660,821 1660.0,831.0 L1660.0,836.0 Q1660,846 1669.2,849.9 L1728.4,875.1 Q1733,877 1736.5,880.5 L1736.5,880.5 Q1740,884 1738.7,888.8 L1731.6,915.3 Q1729,925 1726.8,934.8 L1725.2,942.2 Q1723,952 1721.6,961.9 L1715.4,1005.1 Q1714,1015 1714.6,1025.0 L1715.4,1036.0 Q1716,1046 1723.8,1052.3 L1729.2,1056.7 Q1737,1063 1746.5,1066.1 L1779.5,1076.9 Q1789,1080 1796.9,1086.2 L1812,1098" fill="none" stroke="#fdf3dc" stroke-width="6.5" stroke-linejoin="round" stroke-linecap="round"/>
<path d="M1818,903 L1862,893" fill="none" stroke="#fdf3dc" stroke-width="6.5" stroke-linejoin="round" stroke-linecap="round"/>
<path d="M1771,225 L1748.7,256.8 Q1743,265 1738.5,273.9 L1695.5,360.1 Q1691,369 1686.1,377.7 L1672.9,401.3 Q1668,410 1668.0,420.0 L1668,488" fill="none" stroke="#f5ad3e" stroke-width="4.3" stroke-linejoin="round" stroke-linecap="round"/>
<path d="M1668,488 L1758.5,517.9 Q1768,521 1777.8,519.3 L1832.2,509.7 Q1842,508 1851.8,506.0 L1862,504" fill="none" stroke="#f5ad3e" stroke-width="4.3" stroke-linejoin="round" stroke-linecap="round"/>
<path d="M1668,488 L1675.7,509.6 Q1679,519 1686.5,525.6 L1688.5,527.4 Q1696,534 1704.9,538.5 L1707.1,539.5 Q1716,544 1725.9,545.4 L1815.1,557.6 Q1825,559 1834.6,556.2 L1862,548" fill="none" stroke="#f5ad3e" stroke-width="4.3" stroke-linejoin="round" stroke-linecap="round"/>
<path d="M1862,505 L1854.0,505.5 Q1846,506 1843.5,513.6 L1832.2,547.5 Q1829,557 1826.0,566.5 L1803.0,638.5 Q1800,648 1797.2,657.6 L1781.8,709.4 Q1779,719 1776.5,728.7 L1756,809" fill="none" stroke="#f5ad3e" stroke-width="4.3" stroke-linejoin="round" stroke-linecap="round"/>
<path d="M1687,636 L1800,650" fill="none" stroke="#f5ad3e" stroke-width="4.3" stroke-linejoin="round" stroke-linecap="round"/>
<path d="M1566,675 L1543.1,784.2 Q1541,794 1550.8,796.2 L1650.2,818.8 Q1660,821 1660.0,831.0 L1660.0,836.0 Q1660,846 1669.2,849.9 L1728.4,875.1 Q1733,877 1736.5,880.5 L1736.5,880.5 Q1740,884 1738.7,888.8 L1731.6,915.3 Q1729,925 1726.8,934.8 L1725.2,942.2 Q1723,952 1721.6,961.9 L1715.4,1005.1 Q1714,1015 1714.6,1025.0 L1715.4,1036.0 Q1716,1046 1723.8,1052.3 L1729.2,1056.7 Q1737,1063 1746.5,1066.1 L1779.5,1076.9 Q1789,1080 1796.9,1086.2 L1812,1098" fill="none" stroke="#f5ad3e" stroke-width="4.3" stroke-linejoin="round" stroke-linecap="round"/>
<path d="M1818,903 L1862,893" fill="none" stroke="#f5ad3e" stroke-width="4.3" stroke-linejoin="round" stroke-linecap="round"/>
<text x="1565" y="561" font-family="Liberation Sans" font-size="15" fill="#8a8a7c"  text-anchor="start" letter-spacing="0.6">Промышленный</text>
<text x="1642" y="521" font-family="Liberation Sans" font-size="12" fill="#6fb06a" font-style="italic" text-anchor="start" letter-spacing="0.2">сквер Памяти</text>
<text x="1706" y="638" font-family="Liberation Sans" font-size="12" fill="#6fb06a" font-style="italic" text-anchor="start" letter-spacing="0.2">парк Победы</text>
<text x="1509" y="665" font-family="Liberation Sans" font-size="12" fill="#6fb06a" font-style="italic" text-anchor="start" letter-spacing="0.1">сквер Героев</text>
<text x="1527" y="680" font-family="Liberation Sans" font-size="12" fill="#6fb06a" font-style="italic" text-anchor="start" letter-spacing="0.1">России</text>
<text x="1487" y="719" font-family="Liberation Sans" font-size="11.5" fill="#5a5a5a"  text-anchor="start" letter-spacing="0.2" transform="rotate(10 1487 719)">ерспективная</text>
<text x="1622" y="752" font-family="Liberation Sans" font-size="11.5" fill="#5a5a5a"  text-anchor="start" letter-spacing="0.2" transform="rotate(-80 1622 752)">Рогожникова</text>
<text x="1673" y="792" font-family="Liberation Sans" font-size="11.5" fill="#5a5a5a"  text-anchor="start" letter-spacing="0.2" transform="rotate(-80 1673 792)">Пирогова</text>
<text x="1738" y="778" font-family="Liberation Sans" font-size="11.5" fill="#5a5a5a"  text-anchor="start" letter-spacing="0.2" transform="rotate(-80 1738 778)">50 лет ВЛКСМ</text>
<text x="1629" y="972" font-family="Liberation Sans" font-size="12" fill="#5a5a5a"  text-anchor="start" letter-spacing="0.3" transform="rotate(-35 1629 972)">Черниговская</text>
<text x="1772" y="228" font-family="Liberation Sans" font-size="11.5" fill="#6a5a40"  text-anchor="start" letter-spacing="0.2" transform="rotate(-57 1772 228)">проспект</text>
<text x="1846" y="347" font-family="Liberation Sans" font-size="11.5" fill="#5a5a5a"  text-anchor="start" letter-spacing="0">Вас</text>
<path d="M1618,333 L1619.0,336.5 Q1620,340 1623.4,341.4 L1626.0,342.5 Q1632,345 1638.0,347.6 L1678.9,365.2 Q1683,367 1687.0,369.0 L1687.0,369.0 Q1691,371 1688.7,374.8 L1678.6,392.0 Q1675,398 1671.7,404.2 L1671.3,404.8 Q1668,411 1668.0,418.0 L1668.0,479.0 Q1668,486 1661.4,483.6 L1647.6,478.4 Q1641,476 1639.3,482.8 L1634.7,500.2 Q1633,507 1629.4,513.0 L1624.6,521.0 Q1621,527 1615.8,531.7 L1605.2,541.3 Q1600,546 1598.8,552.9 L1595.2,573.1 Q1594,580 1594.9,586.9 L1598,610" fill="none" stroke="#f4f7ff" stroke-width="9.5" stroke-linejoin="round" stroke-linecap="round" opacity="0.8"/>
<path d="M1598,610 L1589.9,618.1 Q1585,623 1582.9,629.7 L1579.0,641.8 Q1577,648 1574.5,654.0 L1574.5,654.0 Q1572,660 1570.3,666.3 L1568,675" fill="none" stroke="#f4f7ff" stroke-width="9.5" stroke-linejoin="round" stroke-linecap="round" opacity="0.8"/>
<path d="M1598,610 L1638.3,622.0 Q1645,624 1651.7,626.0 L1679.3,634.0 Q1686,636 1689.9,641.8 L1690.1,642.2 Q1694,648 1695.0,654.9 L1695.0,655.1 Q1696,662 1695.8,669.0 L1695.2,683.1 Q1695,690 1691.5,696.0 L1691.5,696.0 Q1688,702 1694.8,703.4 L1770.1,718.6 Q1777,720 1775.6,726.8 L1761,796" fill="none" stroke="#f4f7ff" stroke-width="9.5" stroke-linejoin="round" stroke-linecap="round" opacity="0.8"/>
<path d="M1740,881 L1730.8,916.2 Q1729,923 1735.8,921.5 L1819,903" fill="none" stroke="#f4f7ff" stroke-width="9.5" stroke-linejoin="round" stroke-linecap="round" opacity="0.8"/>
<path d="M1796,912 L1788,962" fill="none" stroke="#f4f7ff" stroke-width="9.5" stroke-linejoin="round" stroke-linecap="round" opacity="0.8"/>
<circle cx="1670" cy="465" r="10.5" fill="#f4f7ff" opacity="0.8"/>
<path d="M1618,333 L1619.0,336.5 Q1620,340 1623.4,341.4 L1626.0,342.5 Q1632,345 1638.0,347.6 L1678.9,365.2 Q1683,367 1687.0,369.0 L1687.0,369.0 Q1691,371 1688.7,374.8 L1678.6,392.0 Q1675,398 1671.7,404.2 L1671.3,404.8 Q1668,411 1668.0,418.0 L1668.0,479.0 Q1668,486 1661.4,483.6 L1647.6,478.4 Q1641,476 1639.3,482.8 L1634.7,500.2 Q1633,507 1629.4,513.0 L1624.6,521.0 Q1621,527 1615.8,531.7 L1605.2,541.3 Q1600,546 1598.8,552.9 L1595.2,573.1 Q1594,580 1594.9,586.9 L1598,610" fill="none" stroke="#2f5cf2" stroke-width="7.5" stroke-linejoin="round" stroke-linecap="round"/>
<path d="M1598,610 L1589.9,618.1 Q1585,623 1582.9,629.7 L1579.0,641.8 Q1577,648 1574.5,654.0 L1574.5,654.0 Q1572,660 1570.3,666.3 L1568,675" fill="none" stroke="#2f5cf2" stroke-width="7.5" stroke-linejoin="round" stroke-linecap="round"/>
<path d="M1598,610 L1638.3,622.0 Q1645,624 1651.7,626.0 L1679.3,634.0 Q1686,636 1689.9,641.8 L1690.1,642.2 Q1694,648 1695.0,654.9 L1695.0,655.1 Q1696,662 1695.8,669.0 L1695.2,683.1 Q1695,690 1691.5,696.0 L1691.5,696.0 Q1688,702 1694.8,703.4 L1770.1,718.6 Q1777,720 1775.6,726.8 L1761,796" fill="none" stroke="#2f5cf2" stroke-width="7.5" stroke-linejoin="round" stroke-linecap="round"/>
<path d="M1740,881 L1730.8,916.2 Q1729,923 1735.8,921.5 L1819,903" fill="none" stroke="#2f5cf2" stroke-width="7.5" stroke-linejoin="round" stroke-linecap="round"/>
<path d="M1796,912 L1788,962" fill="none" stroke="#2f5cf2" stroke-width="7.5" stroke-linejoin="round" stroke-linecap="round"/>
<circle cx="1670" cy="465" r="9.5" fill="#2f5cf2"/><circle cx="1731" cy="895" r="4.5" fill="#2f5cf2"/>
<circle cx="1631" cy="332" r="10" fill="#43a843"/><path d="M1628 327.5L1635.5 332L1628 336.5Z" fill="#fff"/>
<path d="M1566 662L1573 670L1580 662Z" fill="#2f5cf2"/><circle cx="1573" cy="656" r="10" fill="#2f5cf2"/>
<text x="1573" y="660.5" font-family="Liberation Sans" font-weight="700" font-size="12" fill="#fff" text-anchor="middle">P</text>
<path d="M1780 959L1787 967L1794 959Z" fill="#2f5cf2"/><circle cx="1787" cy="953" r="10" fill="#2f5cf2"/>
<text x="1787" y="957.5" font-family="Liberation Sans" font-weight="700" font-size="12" fill="#fff" text-anchor="middle">P</text>
<circle cx="1681" cy="499" r="8" fill="#fff" opacity="0.85"/><circle cx="1681" cy="497" r="3.6" fill="#59b152"/><rect x="1680.2" y="499" width="1.6" height="5" fill="#59b152"/>
<circle cx="1740" cy="616" r="8" fill="#fff" opacity="0.85"/><circle cx="1740" cy="614" r="3.6" fill="#59b152"/><rect x="1739.2" y="616" width="1.6" height="5" fill="#59b152"/>
<circle cx="1543" cy="643" r="8" fill="#fff" opacity="0.85"/><circle cx="1543" cy="641" r="3.6" fill="#59b152"/><rect x="1542.2" y="643" width="1.6" height="5" fill="#59b152"/>
<circle cx="1743" cy="265" r="7.5" fill="#6ab8e8"/><rect x="1739.5" y="260.5" width="7" height="8" rx="1.5" fill="#fff"/>
<rect x="1636" y="148" width="10" height="12" rx="2" fill="#e8f3ea" stroke="#5a9a8a" stroke-width="0.8"/><text x="1641" y="158" font-family="Liberation Sans" font-size="10" fill="#3a7a6a" text-anchor="middle">2</text>
<rect x="1599" y="287" width="10" height="12" rx="2" fill="#e8f3ea" stroke="#5a9a8a" stroke-width="0.8"/><text x="1604" y="297" font-family="Liberation Sans" font-size="10" fill="#3a7a6a" text-anchor="middle">0</text>
<rect x="1761" y="899" width="16" height="12" rx="2" fill="#e8f3ea" stroke="#5a9a8a" stroke-width="0.8"/><text x="1769" y="909" font-family="Liberation Sans" font-size="10" fill="#3a7a6a" text-anchor="middle">38</text>
<circle cx="1757" cy="840.5" r="39.5" fill="#fff" stroke="#1414d2" stroke-width="4"/>
<circle cx="1748" cy="849" r="25" fill="none" stroke="#3b6cf0" stroke-width="4"/>
<circle cx="1748" cy="849" r="20" fill="#fff"/>
<text x="1748" y="856" font-family="Liberation Sans" font-size="17" fill="#111" text-anchor="middle">3</text>
<circle cx="1794.5" cy="822" r="14" fill="#fff" stroke="#1414d2" stroke-width="2.5"/>
<text x="1794.5" y="828" font-family="Liberation Sans" font-size="16" fill="#111" text-anchor="middle">2</text>
<rect x="1825" y="1013" width="8" height="10" fill="#666"/><rect x="1823" y="1023" width="12" height="3" fill="#555"/>
</g>
<rect x="1497.5" y="160.5" width="33" height="65" rx="3" fill="#fff" stroke="#8c9a74" stroke-width="1.5"/>
<line x1="1498" y1="192.5" x2="1530" y2="192.5" stroke="#ddd" stroke-width="1"/>
<path d="M1508.5 179.5H1521M1514.7 173V186" stroke="#111" stroke-width="2.2"/>
<path d="M1508.5 210.5H1520.5" stroke="#111" stroke-width="2.2"/>
<rect x="1497.5" y="237.5" width="33" height="33" rx="3" fill="#fff" stroke="#8c9a74" stroke-width="1.5"/>
<circle cx="1513.5" cy="253.5" r="3" fill="none" stroke="#222" stroke-width="1.8"/><path d="M1515.7 255.7L1519 259" stroke="#222" stroke-width="2.2"/>
<rect x="1803.5" y="160.5" width="48" height="48" rx="4" fill="#fff" stroke="#b8b8b8" stroke-width="1.2"/>
<path d="M1827 178L1841 185L1827 192L1813 185Z" fill="#c8c8c8" stroke="#aaa" stroke-width="0.8"/>
<path d="M1813 188L1827 195L1841 188" fill="none" stroke="#999" stroke-width="1.2"/>
<path d="M1813 191.5L1827 198.5L1841 191.5" fill="none" stroke="#999" stroke-width="1.2"/>
<path d="M1827 174.5L1841 181.5L1827 188.5L1813 181.5Z" fill="#e0e0e0" stroke="#aaa" stroke-width="0.8"/>
</svg>
</body></html>
